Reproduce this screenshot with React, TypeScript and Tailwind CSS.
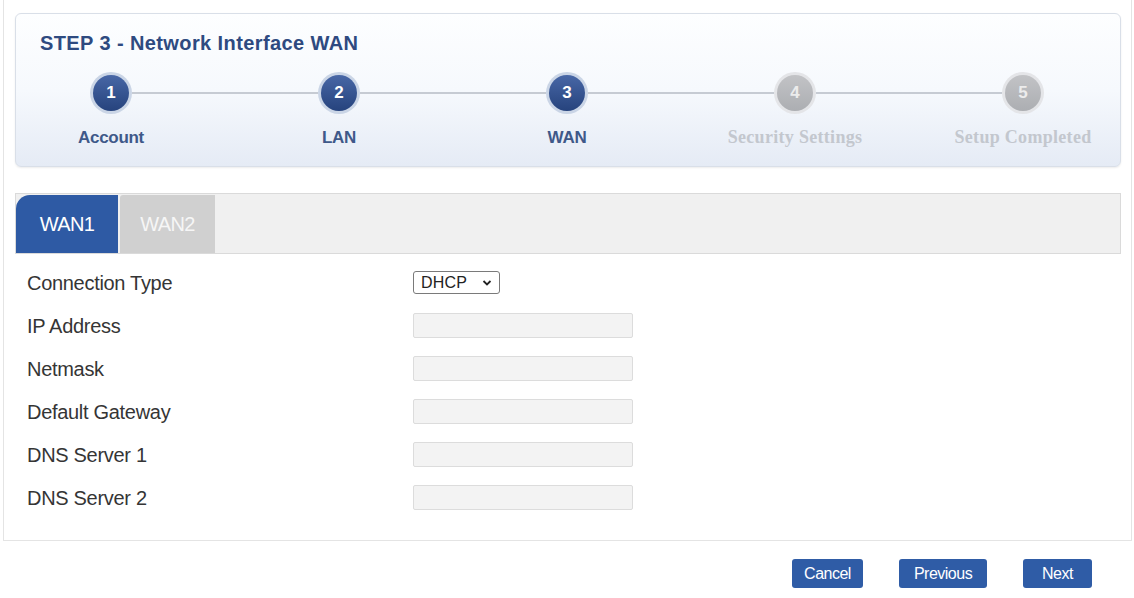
import React from "react";

type Step = { n: number; label: string; active: boolean };

const steps: Step[] = [
  { n: 1, label: "Account", active: true },
  { n: 2, label: "LAN", active: true },
  { n: 3, label: "WAN", active: true },
  { n: 4, label: "Security Settings", active: false },
  { n: 5, label: "Setup Completed", active: false },
];

const fields = ["IP Address", "Netmask", "Default Gateway", "DNS Server 1", "DNS Server 2"];

function StepItem({ step, first, last }: { step: Step; first: boolean; last: boolean }) {
  return (
    <div className="w-[228px] shrink-0 flex flex-col items-center">
      <div className="w-full flex items-center">
        <div className={first ? "flex-1 h-[2px]" : "flex-1 h-[2px] bg-[#c6cbd3]"} />
        {step.active ? (
          <div className="w-[42px] h-[42px] rounded-full bg-[#cad5e6] flex items-center justify-center">
            <div className="w-[36px] h-[36px] rounded-full bg-gradient-to-b from-[#4867a6] to-[#26437d] flex items-center justify-center text-white font-bold text-[17px]">
              {step.n}
            </div>
          </div>
        ) : (
          <div className="w-[42px] h-[42px] rounded-full bg-[#e4e5e8] flex items-center justify-center">
            <div className="w-[36px] h-[36px] rounded-full bg-gradient-to-b from-[#c2c3c6] to-[#acaeb2] flex items-center justify-center text-[#ececec] font-bold text-[17px]">
              {step.n}
            </div>
          </div>
        )}
        <div className={last ? "flex-1 h-[2px]" : "flex-1 h-[2px] bg-[#c6cbd3]"} />
      </div>
      {step.active ? (
        <div className="mt-[12px] text-[17px] leading-[23px] font-bold text-[#3f5989] tracking-[-0.3px]">{step.label}</div>
      ) : (
        <div className="mt-[12px] text-[18px] leading-[23px] font-bold text-[#c3c7ce] tracking-[0.3px] font-['Liberation_Serif',serif]">{step.label}</div>
      )}
    </div>
  );
}

export default function App() {
  return (
    <div className="w-[1134px] h-[598px] bg-white font-['Liberation_Sans',Arial,sans-serif] overflow-hidden">
      <div className="ml-[3px] w-[1129px] h-[541px] border border-t-0 border-[#e4e4e4] pl-[11px] pr-[10px] pt-[13px]">
        {/* Step header panel */}
        <div className="h-[154px] rounded-[6px] border border-[#d9dfe8] bg-gradient-to-b from-[#fdfeff] via-[#f6f9fd] to-[#e5ebf5] shadow-[0_1px_2px_rgba(0,0,0,0.08)]">
          <div className="pl-[24px] pt-[15px] text-[20px] leading-[28px] font-bold text-[#2e4a80] tracking-[0.4px]">
            STEP 3 - Network Interface WAN
          </div>
          <div className="-ml-[19px] mt-[15px] flex">
            {steps.map((s, i) => (
              <StepItem key={s.n} step={s} first={i === 0} last={i === steps.length - 1} />
            ))}
          </div>
        </div>

        {/* Tabs */}
        <div className="mt-[26px] h-[61px] bg-[#f0f0f0] border border-[#dadada] flex items-end">
          <div className="w-[102px] h-[58px] bg-[#2e5aa4] rounded-tl-[14px] flex items-center justify-center text-white text-[20px] tracking-[-0.6px]">
            WAN1
          </div>
          <div className="ml-[2px] w-[95px] h-[58px] bg-[#d0d0d0] rounded-tl-[3px] flex items-center justify-center text-[#f6f6f6] text-[20px] tracking-[-0.6px]">
            WAN2
          </div>
        </div>

        {/* Form */}
        <div className="pt-[7px] pl-[12px]">
          <div className="h-[43px] flex items-center">
            <div className="w-[386px] text-[20px] text-[#353535] tracking-[-0.3px]">Connection Type</div>
            <div className="w-[87px] h-[23px] border border-[#7a7a7a] rounded-[3px] bg-white flex items-center pl-[7px] pr-[7px] justify-between text-[16px] text-[#222]">
              <span className="tracking-[0.2px]">DHCP</span>
              <svg width="10" height="8" viewBox="0 0 10 8">
                <path d="M1.5 2 L5 5.5 L8.5 2" fill="none" stroke="#222" strokeWidth="1.8" />
              </svg>
            </div>
          </div>
          {fields.map((f) => (
            <div key={f} className="h-[43px] flex items-center">
              <div className="w-[386px] text-[20px] text-[#353535] tracking-[-0.3px]">{f}</div>
              <div className="w-[220px] h-[25px] bg-[#f3f3f3] border border-[#dcdcdc] rounded-[2px]" />
            </div>
          ))}
        </div>
      </div>

      {/* Buttons */}
      <div className="mt-[18px] flex justify-end pr-[42px] gap-[36px]">
        <button className="w-[71px] h-[29px] bg-[#2f5ca6] rounded-[3px] text-white text-[16px] tracking-[-0.5px]">Cancel</button>
        <button className="w-[88px] h-[29px] bg-[#2f5ca6] rounded-[3px] text-white text-[16px] tracking-[-0.5px]">Previous</button>
        <button className="w-[69px] h-[29px] bg-[#2f5ca6] rounded-[3px] text-white text-[16px] tracking-[-0.5px]">Next</button>
      </div>
    </div>
  );
}
